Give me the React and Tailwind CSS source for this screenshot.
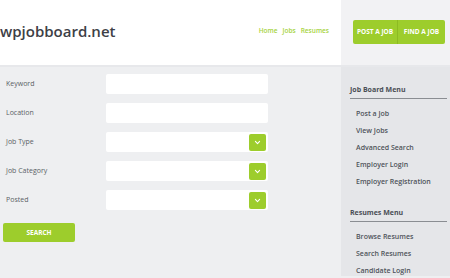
import React from 'react';

const green = 'bg-[#9dcd2c]';

function Chevron() {
  return (
    <svg viewBox="0 0 10 10" className="w-[7px] h-[7px]" fill="none" stroke="white" strokeWidth="1.6" strokeLinecap="round" strokeLinejoin="round">
      <path d="M2 3.5 L5 6.5 L8 3.5" />
    </svg>
  );
}

function Field({ label, select }) {
  return (
    <div className="flex items-center h-[20px]">
      <div className="w-[106px] pl-[6px] text-[7px] text-[#5a5f66]">{label}</div>
      <div className="w-[162px] h-full bg-white rounded-[2px] flex items-center justify-end pr-[2px]">
        {select && (
          <div className={`w-[17px] h-[17px] ${green} rounded-[2px] flex items-center justify-center`}>
            <Chevron />
          </div>
        )}
      </div>
    </div>
  );
}

function Menu({ title, items, className = '' }) {
  return (
    <div className={className}>
      <div className="text-[7px] font-bold text-[#4a4e55] leading-[10px]">{title}</div>
      <div className="mt-[3px] h-px bg-[#8a8d92] mr-[3px]" />
      <div className="flex flex-col gap-[7px] pl-[6px] mt-[10px]">
        {items.map((it) => (
          <div key={it} className="text-[7px] font-semibold text-[#4f535a] leading-[10px]">{it}</div>
        ))}
      </div>
    </div>
  );
}

export default function App() {
  return (
    <div className="w-[450px] h-[278px] overflow-hidden bg-[#eeeff1] font-['Open_Sans',sans-serif]">
      <div className="flex h-[67px] border-b-2 border-[#e7e8eb]">
        <div className="w-[341px] bg-white flex items-center justify-between pr-[12px]">
          <div className="text-[15px] font-semibold text-[#3d4046] -mt-[2px]">wpjobboard.net</div>
          <div className="flex gap-[5px] text-[6.5px] font-semibold text-[#a6d33e] -mt-[3px]">
            <span>Home</span>
            <span>Jobs</span>
            <span>Resumes</span>
          </div>
        </div>
        <div className="flex-1 bg-[#f2f2f4] flex items-center pl-[12px] -mt-[1px]">
          <div className={`flex h-[24px] ${green} rounded-[2px] text-white text-[6.5px] font-bold`}>
            <div className="w-[45px] flex items-center justify-center border-r border-[#8dbb22]">POST A JOB</div>
            <div className="w-[47px] flex items-center justify-center">FIND A JOB</div>
          </div>
        </div>
      </div>
      <div className="flex h-[209px]">
        <div className="w-[341px] pt-[7px]">
          <div className="flex flex-col gap-[9px]">
            <Field label="Keyword" />
            <Field label="Location" />
            <Field label="Job Type" select />
            <Field label="Job Category" select />
            <Field label="Posted" select />
          </div>
          <div className={`ml-[3px] mt-[13px] w-[72px] h-[19px] ${green} rounded-[2px] flex items-center justify-center text-white text-[6.5px] font-bold`}>
            SEARCH
          </div>
        </div>
        <div className="flex-1 bg-[#e5e6e9] pl-[9px] pt-[18px]">
          <Menu title="Job Board Menu" items={['Post a Job', 'View Jobs', 'Advanced Search', 'Employer Login', 'Employer Registration']} />
          <Menu className="mt-[21px]" title="Resumes Menu" items={['Browse Resumes', 'Search Resumes', 'Candidate Login']} />
        </div>
      </div>
    </div>
  );
}
